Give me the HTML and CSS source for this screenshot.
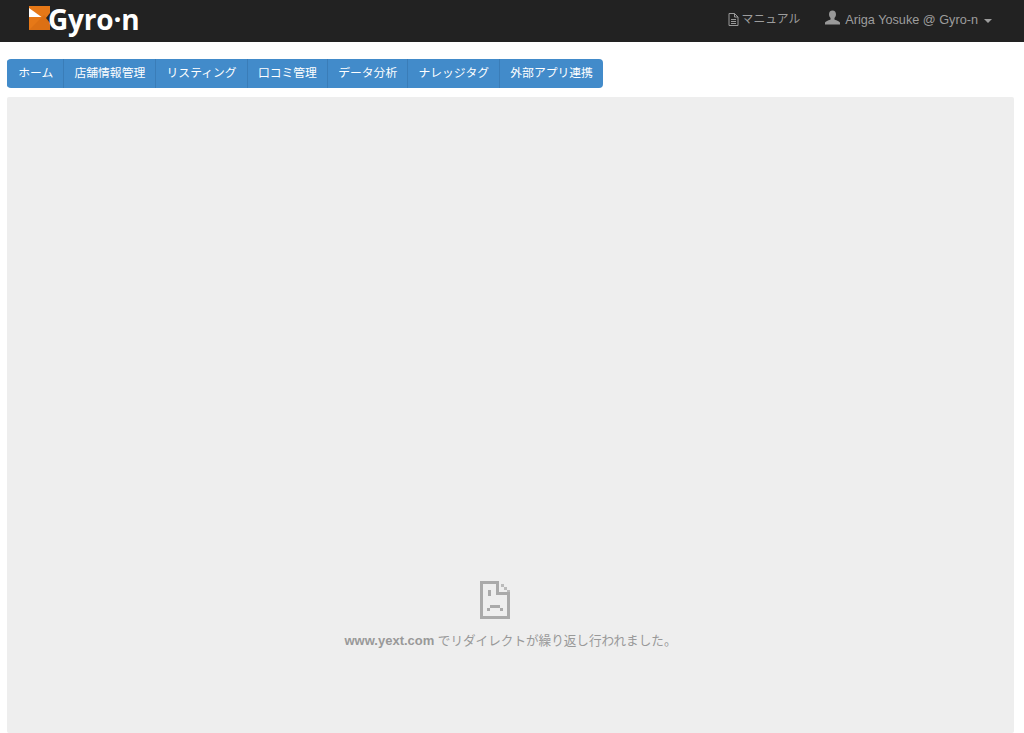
FILE: index.html
```html
<!DOCTYPE html>
<html lang="ja">
<head>
  <meta charset="UTF-8" />
  <title>Gyro-n</title>
  <link rel="stylesheet" href="styles.css">
</head>
<body>

<header class="navbar">
  <a class="brand" href="#">
    <svg class="brand-mark" width="21" height="24" viewBox="0 0 21 24">
      <rect width="21" height="24" fill="#e67817"/>
      <path d="M0 24L15 9l6 6v9z" fill="#dc7014"/>
      <path d="M21 7l-4 5 4 5z" fill="#222"/>
      <path d="M0 2l12.500 9H0z" fill="#fff"/>
    </svg>
    <span class="brand-name">Gyro·n</span>
  </a>
  <nav class="nav-right">
    <a class="nav-link" href="#">
      <svg width="11" height="13" viewBox="0 0 11 13" fill="none" stroke="#999" stroke-width="1">
        <path d="M1 .5h5.500l3.500 3.500v8.500H1z"/>
        <path d="M6.500.5v3.500H10M3 6.500h5M3 8.500h5M3 10.500h5"/>
      </svg>
      マニュアル
    </a>
    <a class="nav-link user-link" href="#">
      <svg width="15" height="15" viewBox="0 0 16 15" fill="#999">
        <path d="M8 0c2.400 0 3.700 1.700 3.700 4 0 1.700-.7 3.200-1.600 4.100v1.400c.6.700 5.900 1.600 5.900 3.700V15H0v-1.800c0-2.100 5.300-3 5.900-3.700V8.100C5 7.200 4.300 5.700 4.300 4 4.300 1.700 5.600 0 8 0z"/>
      </svg>
      Ariga Yosuke @ Gyro-n
      <span class="caret"></span>
    </a>
  </nav>
</header>

<div class="toolbar">
  <a class="tool-btn" href="#">ホーム</a>
  <a class="tool-btn" href="#">店舗情報管理</a>
  <a class="tool-btn" href="#">リスティング</a>
  <a class="tool-btn" href="#">口コミ管理</a>
  <a class="tool-btn" href="#">データ分析</a>
  <a class="tool-btn" href="#">ナレッジタグ</a>
  <a class="tool-btn" href="#">外部アプリ連携</a>
</div>

<main class="frame">
  <svg class="error-icon" width="30" height="38" viewBox="0 0 30 38" fill="#aaa" fill-rule="evenodd" shape-rendering="crispEdges">
    <path d="M0 0h19v11h11v27H0zM3 3v32h24V14H16V3z"/>
    <path d="M8 9h3v6H8zM10 24h10v3H10zM7 27h3v3H7zM20 27h3v3h-3z"/>
    <path fill="#bbb" d="M21 3h3v3h-3zM24 6h3v3h-3zM27 9h3v2h-3z"/>
  </svg>
  <p class="error-text"><b>www.yext.com</b> でリダイレクトが繰り返し行われました。</p>
</main>

</body>
</html>
```

FILE: styles.css
```css
body {
  font-family: "Liberation Sans", "Noto Sans CJK JP", sans-serif;
  margin: 0;
  height: 733px;
  overflow: hidden;
  background-color: white;
}
a { text-decoration: none; }

.navbar {
  height: 42px;
  background-color: #222;
  display: flex;
  justify-content: space-between;
  padding: 0 32px 0 29px;
}
.brand {
  display: flex;
  align-items: flex-start;
  padding-top: 6px;
}
.brand-name {
  font-family: "Open Sans", sans-serif;
  font-weight: 700;
  font-size: 28px;
  line-height: 30px;
  letter-spacing: -0.2px;
  color: white;
  margin: -2px 0 0 -2px;
}
.nav-right {
  display: flex;
  gap: 25px;
  padding-top: 10px;
}
.nav-link {
  display: flex;
  align-items: flex-start;
  gap: 3px;
  color: #9d9d9d;
  font-size: 11.8px;
  line-height: 18px;
}
.user-link {
  font-size: 12.7px;
  padding-top: 1px;
  gap: 5px;
}
.nav-link svg { margin-top: 3px; }
.user-link svg { margin-top: -1px; }
.caret {
  width: 0;
  height: 0;
  margin: 8px 0 0 1px;
  border-top: 4px solid #9d9d9d;
  border-left: 4px solid transparent;
  border-right: 4px solid transparent;
}

.toolbar {
  display: flex;
  width: max-content;
  margin: 17px 0 9px 7px;
  border-radius: 4px;
  overflow: hidden;
  background-color: #428bca;
}
.tool-btn {
  height: 29px;
  line-height: 29px;
  padding: 0 10.15px;
  color: white;
  font-size: 11.8px;
  border-left: 1px solid #3a7db8;
}
.tool-btn:first-child { border-left-color: #428bca; }

.frame {
  margin: 0 10px 0 7px;
  height: 636px;
  background-color: #eee;
  border-radius: 2px;
  display: flex;
  flex-direction: column;
  align-items: center;
  padding-top: 484px;
  box-sizing: border-box;
}
.error-icon { margin-right: 31px; }
.error-text {
  margin: 13px 0 0;
  font-size: 12.6px;
  line-height: 18px;
  color: #999;
}
.error-text b { font-size: 13px; }
```
